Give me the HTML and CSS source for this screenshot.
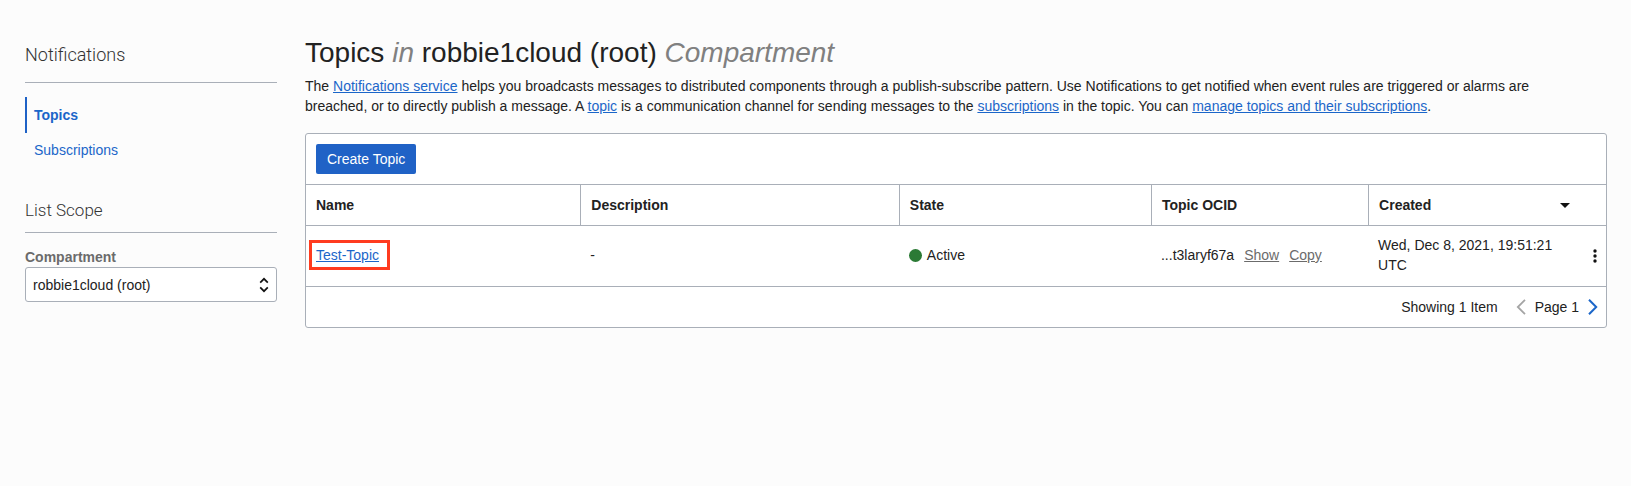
FILE: index.html
```html
<!DOCTYPE html>
<html lang="en">
<head>
<meta charset="utf-8">
<meta name="viewport" content="width=device-width, initial-scale=1">
<title>Topics</title>
<link rel="stylesheet" href="styles.css">
</head>
<body>
<div class="layout">
  <aside class="sidebar">
    <h2 class="side-title">Notifications</h2>
    <nav class="side-nav" aria-label="Notifications">
      <a class="side-link side-link-active" href="#topics" aria-current="page">Topics</a>
      <a class="side-link" href="#subscriptions">Subscriptions</a>
    </nav>
    <h3 class="side-subtitle">List Scope</h3>
    <label class="field-label" for="compartment">Compartment</label>
    <div class="select-wrap">
      <select class="select" id="compartment">
        <option>robbie1cloud (root)</option>
      </select>
      <svg class="select-icon" width="10" height="16" viewBox="0 0 10 16" aria-hidden="true"><path d="M1.2 5.6 5 1.8l3.8 3.8M1.2 10.4 5 14.2l3.8-3.8" fill="none" stroke="#111" stroke-width="1.7"/></svg>
    </div>
  </aside>
  <main class="main">
    <h1 class="title">Topics <em>in</em> robbie1cloud (root) <em>Compartment</em></h1>
    <p class="intro">The <a href="#service">Notifications service</a> helps you broadcasts messages to distributed components through a publish-subscribe pattern. Use Notifications to get notified when event rules are triggered or alarms are breached, or to directly publish a message. A <a href="#topic">topic</a> is a communication channel for sending messages to the <a href="#subscriptions">subscriptions</a> in the topic. You can <a href="#manage">manage topics and their subscriptions</a>.</p>
    <section class="panel">
      <div class="toolbar"><button class="create" type="button">Create Topic</button></div>
      <table class="table">
        <colgroup><col class="col-name"><col class="col-desc"><col class="col-state"><col class="col-ocid"><col class="col-created"><col class="col-menu"></colgroup>
        <thead>
          <tr>
            <th scope="col">Name</th>
            <th scope="col">Description</th>
            <th scope="col">State</th>
            <th scope="col">Topic OCID</th>
            <th scope="col" colspan="2"><span class="sort">Created <svg width="10" height="5" viewBox="0 0 10 5" aria-hidden="true"><path d="M0 0h10L5 5z" fill="#111"/></svg></span></th>
          </tr>
        </thead>
        <tbody>
          <tr>
            <td><a class="topic-link" href="#test-topic">Test-Topic</a></td>
            <td>-</td>
            <td><span class="state"><span class="dot"></span>Active</span></td>
            <td><span class="ocid">...t3laryf67a <a href="#show">Show</a> <a href="#copy">Copy</a></span></td>
            <td>Wed, Dec 8, 2021, 19:51:21 UTC</td>
            <td class="menu-cell"><button class="icon-button" type="button" aria-label="Actions"><svg width="4" height="14" viewBox="0 0 4 14" aria-hidden="true"><g fill="#111"><circle cx="2" cy="2" r="1.7"/><circle cx="2" cy="7" r="1.7"/><circle cx="2" cy="12" r="1.7"/></g></svg></button></td>
          </tr>
        </tbody>
      </table>
      <div class="pager">
        <span class="count">Showing 1 Item</span>
        <button class="icon-button" type="button" aria-label="Previous page" disabled><svg width="10" height="16" viewBox="0 0 10 16" aria-hidden="true"><path d="M9 .8 1.8 8 9 15.2" fill="none" stroke="#a5a5a5" stroke-width="1.8"/></svg></button>
        <span>Page 1</span>
        <button class="icon-button" type="button" aria-label="Next page"><svg width="10" height="16" viewBox="0 0 10 16" aria-hidden="true"><path d="M1 .8 8.200 8 1 15.200" fill="none" stroke="#1b66c9" stroke-width="2"/></svg></button>
      </div>
    </section>
  </main>
</div>
</body>
</html>
```
FILE: styles.css
```css
* { box-sizing: border-box; }
body {
  margin: 0;
  background: #fcfcfc;
  color: #222;
  font: 14px/20px "Liberation Sans", Arial, sans-serif;
}
a { color: #1b66c9; }
h1, h2, h3, p { margin: 0; }
button, select { font: inherit; }
.layout {
  display: grid;
  grid-template-columns: 252px minmax(0, 1fr);
  gap: 28px;
  padding: 36px 24px 36px 25px;
}
.side-title, .side-subtitle {
  border-bottom: 1px solid #a9afb8;
  color: #333;
  font-family: Roboto, sans-serif;
  font-weight: 300;
}
.side-title { padding: 7px 0 15px; font-size: 18px; line-height: 24px; }
.side-nav { display: grid; margin-top: 14px; }
.side-link {
  padding: 8px 0 8px 7px;
  border-left: 2px solid transparent;
  line-height: 20px;
  text-decoration: none;
}
.side-link + .side-link { padding: 7px 0 9px 7px; }
.side-link-active { border-color: #1f62c6; font-weight: bold; }
.side-subtitle { margin-top: 30px; padding-bottom: 11px; font-size: 17px; line-height: 22px; }
.field-label { display: block; margin-top: 14px; color: #6b6b6b; font-weight: bold; }
.select-wrap { display: grid; align-items: center; }
.select, .select-icon { grid-area: 1 / 1; }
.select {
  width: 100%;
  height: 35px;
  padding: 0 28px 0 7px;
  border: 1px solid #a9afb8;
  border-radius: 3px;
  background: #fff;
  color: #222;
  appearance: none;
}
.select-icon { justify-self: end; margin-right: 8px; pointer-events: none; }
.title { font-size: 28px; line-height: 34px; font-weight: normal; }
.title em { color: #808080; }
.intro { margin-top: 6px; padding-right: 24px; }
.panel {
  margin-top: 17px;
  border: 1px solid #a9afb8;
  border-radius: 3px;
  background: #fff;
}
.toolbar { display: flex; padding: 10px; }
.create {
  height: 30px;
  padding: 0 11px;
  border: 0;
  border-radius: 2px;
  background: #2062c6;
  color: #fff;
}
.table { width: 100%; border-collapse: separate; border-spacing: 0; table-layout: fixed; }
.col-name { width: 21.1%; }
.col-desc { width: 24.5%; }
.col-state { width: 19.4%; }
.col-ocid { width: 16.7%; }
.col-created { width: 15.3%; }
.col-menu { width: 3%; }
.table th, .table td { padding: 10px; text-align: left; }
.table th { border-top: 1px solid #a9afb8; border-bottom: 1px solid #a9afb8; }
.table th + th { border-left: 1px solid #a9afb8; }
.table td { padding: 9px 10px 11px; border-bottom: 1px solid #a9afb8; }
.sort { display: flex; align-items: center; justify-content: space-between; padding-right: 26px; }
.topic-link { padding-right: 4px; outline: 3px solid #ff3b1f; outline-offset: 4px; }
.state { display: flex; align-items: center; gap: 5px; }
.dot { width: 13px; height: 13px; border-radius: 50%; background: #2b7a35; }
.ocid { display: flex; gap: 10px; }
.ocid a { color: #6b6b6b; }
.icon-button { display: inline-flex; padding: 0; border: 0; background: none; }
.table .menu-cell { padding: 0 9px 2px; text-align: right; }
.menu-cell .icon-button { vertical-align: middle; }
.pager { display: flex; align-items: center; justify-content: flex-end; gap: 9px; padding: 10px 8px; }
.count { margin-right: 9px; }
```
